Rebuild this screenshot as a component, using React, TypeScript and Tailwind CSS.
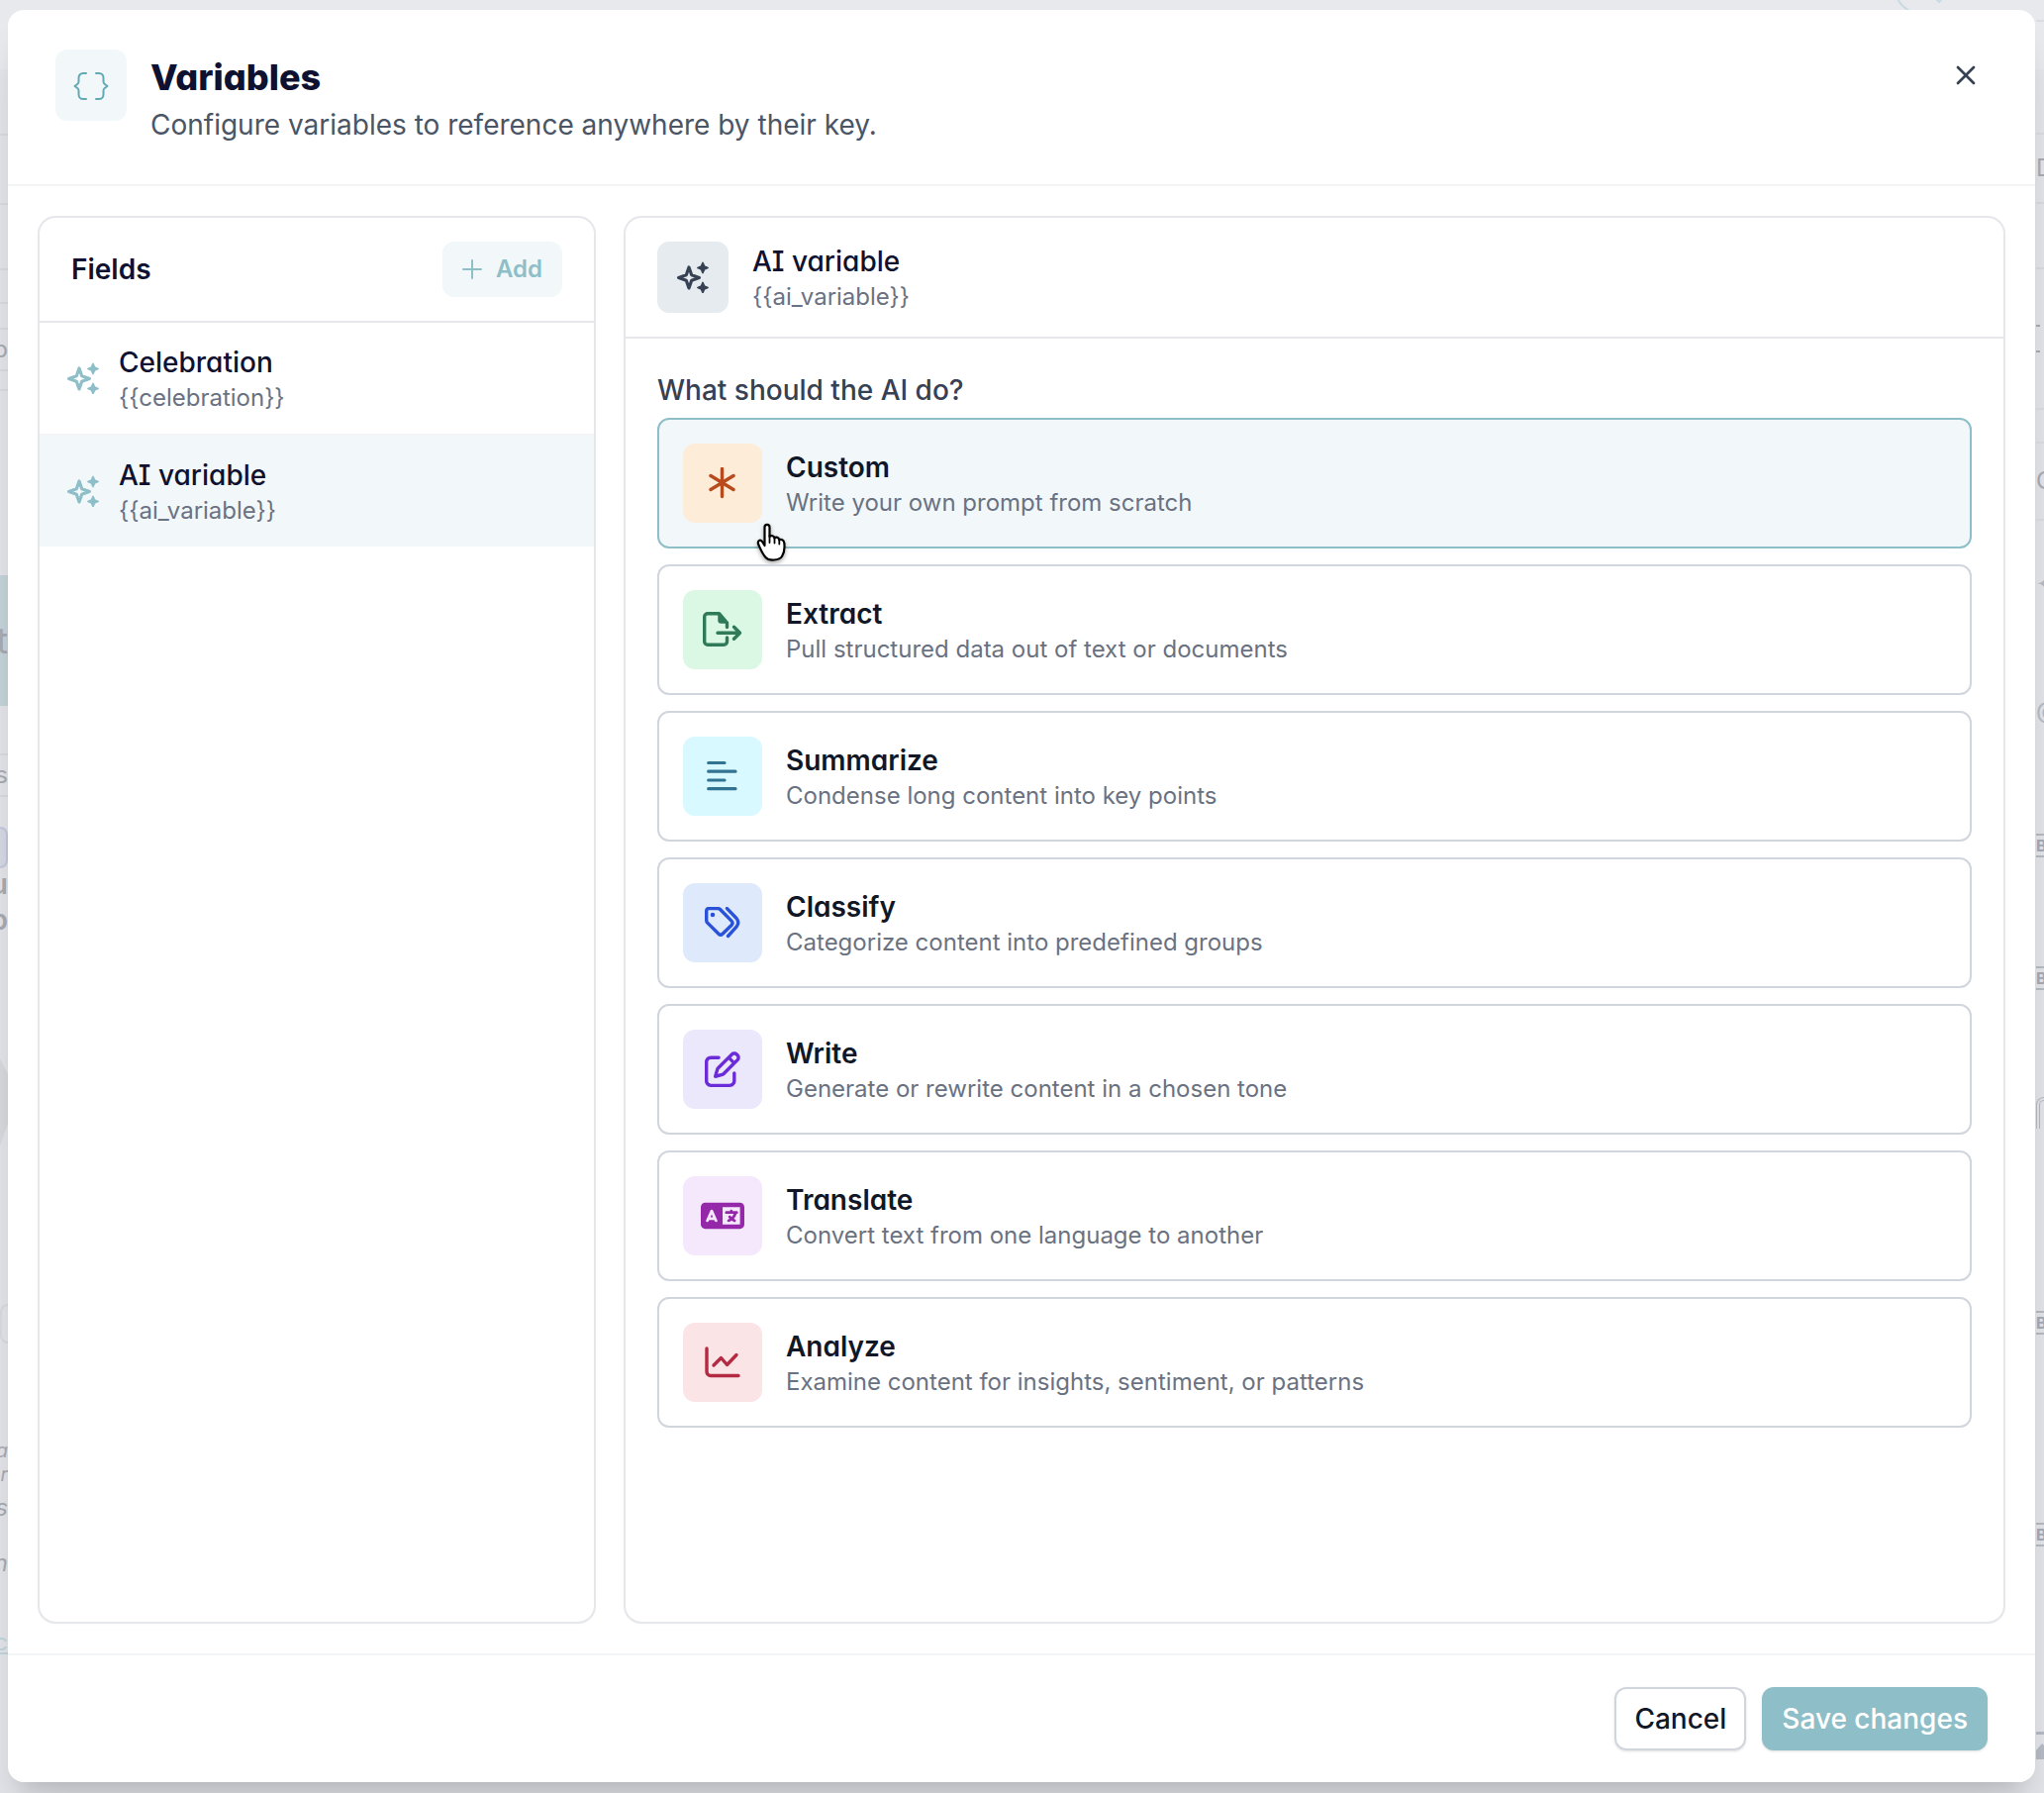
import { useState, type ReactNode } from "react";
import { X } from "lucide-react";
import { FaLanguage, FaRegPenToSquare } from "react-icons/fa6";

const display =
  "font-[Inter,sans-serif] [font-feature-settings:'cv11','cv08'] text-[28px] leading-10";

function Sparkles() {
  return (
    <svg className="size-8" viewBox="0 0 32 32" fill="none" aria-hidden="true">
      <path
        d="M12 6 14.700 13.800 22.400 16.500 14.700 19.200 12 27 9.300 19.200 1.600 16.500 9.300 13.800Z"
        stroke="currentColor"
        strokeWidth="3.2"
        strokeLinejoin="round"
      />
      <path
        d="M26 1.500 27.500 5 31 6.500 27.500 8 26 11.500 24.500 8 21 6.500 24.500 5ZM26 21.500 27.500 25 31 26.500 27.500 28 26 31.500 24.500 28 21 26.500 24.500 25Z"
        fill="currentColor"
        stroke="currentColor"
        strokeWidth="1.8"
        strokeLinejoin="round"
      />
    </svg>
  );
}

function Braces() {
  return (
    <svg className="mt-0.5 h-7 w-9" viewBox="0 0 36 28" fill="none" stroke="currentColor" strokeWidth="2" strokeLinecap="round" strokeLinejoin="round" aria-hidden="true">
      <path d="M13 1H10A4.5 4.5 0 0 0 5.5 5.5V9.5Q5.500 11 4.200 12L1.500 14 4.200 16Q5.500 17 5.500 18.500V22.500A4.500 4.500 0 0 0 10 27H13" />
      <path d="M23 1H26A4.5 4.5 0 0 1 30.500 5.500V9.500Q30.500 11 31.800 12L34.500 14 31.800 16Q30.500 17 30.500 18.500V22.500A4.500 4.500 0 0 1 26 27H23" />
    </svg>
  );
}

function Plus() {
  return (
    <svg className="size-5" viewBox="0 0 20 20" fill="none" stroke="currentColor" strokeWidth="2" strokeLinecap="round" aria-hidden="true">
      <path d="M10 1V19M1 10H19" />
    </svg>
  );
}

function Line({ className, viewBox, children }: { className: string; viewBox: string; children: ReactNode }) {
  return (
    <svg className={className} viewBox={viewBox} fill="none" stroke="currentColor" strokeWidth="3.4" strokeLinecap="round" strokeLinejoin="round" aria-hidden="true">
      {children}
    </svg>
  );
}

const tasks = [
  {
    name: "Custom",
    text: "Write your own prompt from scratch",
    tile: "bg-[#fdecd8] text-[#b84a1c]",
    icon: (
      <Line className="size-8" viewBox="0 0 32 32">
        <path d="M15.500 1.500V29.500M4 8.500 27 22.500M4 22.500 27 8.500" />
      </Line>
    ),
  },
  {
    name: "Extract",
    text: "Pull structured data out of text or documents",
    tile: "bg-[#dbf8e5] text-[#2f7a58]",
    icon: (
      <Line className="h-9 w-10" viewBox="0 0 40 36">
        <path d="M24.500 15.500V11L16.500 1.700H5A3.300 3.300 0 0 0 1.700 5V30A3.300 3.300 0 0 0 5 33.300H21.200A3.300 3.300 0 0 0 24.500 30V26" />
        <path d="M16 2.500V8.500A2.500 2.500 0 0 0 18.500 11H24.500Z" fill="currentColor" strokeWidth="1.500" />
        <path d="M15 21.300H37.500M31.500 15.300 37.500 21.300 31.500 27.300" />
      </Line>
    ),
  },
  {
    name: "Summarize",
    text: "Condense long content into key points",
    tile: "bg-[#d8f9ff] text-[#327391]",
    icon: (
      <Line className="size-8" viewBox="0 0 32 32">
        <path d="M1.700 2.500H18M1.700 11.200H29M1.700 20H18M1.700 28.700H29" strokeWidth="3.2" />
      </Line>
    ),
  },
  {
    name: "Classify",
    text: "Categorize content into predefined groups",
    tile: "bg-[#deeafc] text-[#2a52d8]",
    icon: (
      <Line className="h-8 w-9" viewBox="0 0 36 32">
        <path d="M1.700 4V13.500Q1.700 15 2.800 16.100L14 27.300Q16 29.300 18 27.300L27 18.500Q29 16.300 27 14.100L15.800 2.700Q14.700 1.600 13.200 1.600H4.200Q1.700 1.600 1.700 4Z" />
        <circle cx="8" cy="8" r="2.300" fill="currentColor" stroke="none" />
        <path d="M22.500 1.600 32 11.500Q35.500 15.800 32 20.200L23.500 29.500" />
      </Line>
    ),
  },
  {
    name: "Write",
    text: "Generate or rewrite content in a chosen tone",
    tile: "bg-[#ece8fc] text-[#6a2cd8]",
    icon: <FaRegPenToSquare className="size-9" aria-hidden="true" />,
  },
  {
    name: "Translate",
    text: "Convert text from one language to another",
    tile: "bg-[#f5e8fd] text-[#9528a8]",
    icon: <FaLanguage className="h-9 w-11" aria-hidden="true" />,
  },
  {
    name: "Analyze",
    text: "Examine content for insights, sentiment, or patterns",
    tile: "bg-[#fbe4e6] text-[#b42a42]",
    icon: (
      <Line className="h-8 w-9" viewBox="0 0 36 32">
        <path d="M2 2V25.500A4 4 0 0 0 6 29.500H34" />
        <path d="M9 19 16.500 11.500 22.500 18.500 32 8.500" />
      </Line>
    ),
  },
];

const fields = [
  { name: "Celebration", token: "{{celebration}}" },
  { name: "AI variable", token: "{{ai_variable}}" },
];

function Backdrop() {
  return (
    <div aria-hidden="true" className="absolute inset-0 overflow-hidden bg-[#e4e5ea] text-[24px] leading-8 text-[#a9abb2]">
      <div className="absolute inset-x-0 top-0 h-[70px] bg-[#e7e9ed]" />
      <svg className="absolute right-20 top-0 h-3 w-20" viewBox="0 0 80 12" fill="none" stroke="#c9dbe2" strokeWidth="2">
        <path d="M10 -6Q14 6 26 12M50 -2 54 2 58 -2" />
      </svg>
      <div className="absolute left-0 top-0 w-2 overflow-hidden">
        <div className="flex h-[1811px] flex-col">
          <div className="mt-[135px] h-[72px] border-y-2 border-[#d9dae0]" />
          <div className="h-[66px] border-b-2 border-[#d9dae0]" />
          <div className="h-[34px] border-b-2 border-[#d9dae0]" />
          <div className="h-[26px] border-b-2 border-[#d9dae0]" />
          <div className="flex h-[42px] items-center justify-end border-b-2 border-[#d9dae0]">p</div>
          <div className="h-5 border-b-2 border-[#d9dae0]" />
          <div className="mt-[186px] flex h-[132px] items-center justify-end bg-[#c5d4da] text-[36px]">t</div>
          <div className="mt-12 flex h-11 items-center justify-end border-y-2 border-[#d9dae0]">s</div>
          <div className="mt-[30px] h-[42px] rounded-r-full border-2 border-l-0 border-[#c3c8e0] bg-[#d6d9e3]" />
          <div className="flex justify-end text-[28px] font-semibold">u</div>
          <div className="mt-1 flex justify-end text-[28px] font-semibold">p</div>
          <svg className="mt-[124px] h-[88px] w-2" viewBox="0 0 8 88" fill="#d8d9dd">
            <path d="M0 0 8 16V66L0 88Z" />
          </svg>
          <div className="mt-[160px] h-10 rounded-l-full border-2 border-r-0 border-[#d9dae0]" />
          <div className="mt-24 flex flex-col items-end text-[20px] italic leading-6">
            <span>a</span>
            <span>r</span>
          </div>
          <div className="mt-1.5 flex justify-end italic">s</div>
          <div className="mt-6 flex justify-end italic">n</div>
          <div className="mt-12 flex justify-end text-[#c0d5da] underline">c</div>
        </div>
      </div>
      <div className="absolute right-0 top-0 w-2 overflow-hidden">
        <div className="flex h-[1811px] flex-col">
          <div className="mt-5 h-[116px] border-y-2 border-[#d9dce1]" />
          <div className="flex h-[70px] items-center border-b-2 border-[#d9dae0]">D</div>
          <div className="h-[66px] border-b-2 border-[#d9dae0]" />
          <div className="mt-14 h-7 w-1 border-y-2 border-[#a9abb2]" />
          <div className="mt-14 h-9 border-y-2 border-[#dcdde2]" />
          <div className="flex h-[78px] items-center border-b-2 border-[#dcdde2]">O</div>
          <div className="mt-12 text-[#b5bbc4]">✦</div>
          <div className="mt-[96px] text-[#b5bbc4]">@</div>
          <div className="mt-[108px] h-6 border-y-2 border-[#b5bbc4] text-[16px] font-bold leading-5">B</div>
          <div className="mt-[110px] h-6 border-y-2 border-[#b5bbc4] text-[16px] font-bold leading-5">B</div>
          <div className="mt-[108px] h-8 rounded-tl-lg border-4 border-r-0 border-b-0 border-double border-[#b5bbc4]" />
          <div className="mt-[184px] h-6 border-y-2 border-[#b5bbc4] text-[16px] font-bold leading-5">B</div>
          <div className="mt-[190px] h-6 border-y-2 border-[#b5bbc4] text-[16px] font-bold leading-5">B</div>
          <svg className="mt-[187px] h-7 w-2" viewBox="0 0 8 28" fill="#b5bbc4">
            <path d="M0 0H8V3H0ZM0 19 6 12 8 14V28H0Z" />
          </svg>
        </div>
      </div>
    </div>
  );
}

function Pointer() {
  return (
    <svg className="pointer-events-none absolute -bottom-4 left-24 h-10 w-9 drop-shadow-[0_2px_2px_rgba(0,0,0,0.35)]" viewBox="0 0 36 40" aria-hidden="true">
      <path
        d="M10.500 4.500C10.500 1 15.500 1 15.500 4.500V14C17 12.500 20 13 20.500 15.500C22 14 25 14.800 25.300 17.300C27.500 16.300 30 17.500 30.300 20.500C31 26 30.500 30 28 34C25.500 38 15 39 11.500 35C8 31 6.500 27 4.500 22.500C2.500 18 6 16.500 8 19L10.500 23Z"
        fill="#fff"
        stroke="#000"
        strokeWidth="2.200"
        strokeLinejoin="round"
      />
      <path d="M15.500 13V20M20.500 15.500V20.500M25.300 17.500V21.500" stroke="#000" strokeWidth="1.800" strokeLinecap="round" />
    </svg>
  );
}

export default function App() {
  const [field, setField] = useState(1);
  const [task, setTask] = useState(0);

  return (
    <div className="relative flex min-h-screen pt-2.5 pr-[9px] pb-[11px] pl-2 font-[Inter,sans-serif]">
      <Backdrop />
      <div
        role="dialog"
        aria-labelledby="dialog-title"
        className="relative flex min-w-0 flex-1 flex-col rounded-2xl bg-white shadow-[0_40px_50px_-10px_rgba(0,0,0,0.12),0_16px_20px_-12px_rgba(0,0,0,0.12)]"
      >
        <header className="flex items-start gap-6 border-b-2 border-gray-100 px-12 py-10">
          <div className="flex size-18 items-center justify-center rounded-xl bg-[#f2f8fa] text-[#62a9b6]">
            <Braces />
          </div>
          <div className="flex-1">
            <h1 id="dialog-title" className="font-[Inter,sans-serif] text-[36px] leading-14 font-extrabold text-[#0e1230] [font-feature-settings:'cv11','cv08']">
              Variables
            </h1>
            <p className="text-[28px] leading-10 text-gray-600">Configure variables to reference anywhere by their key.</p>
          </div>
          <button type="button" aria-label="Close" className="mt-2.5 mr-1.5 text-gray-700">
            <X className="size-8" />
          </button>
        </header>

        <main className="flex flex-1 gap-8 p-8">
          <section className="w-140 shrink-0 rounded-2xl shadow-sm ring-2 ring-gray-200">
            <div className="flex items-center justify-between border-b-2 border-gray-200 px-8 py-6">
              <h2 className={`${display} font-semibold text-[#0e1230]`}>Fields</h2>
              <button type="button" className="flex h-14 items-center gap-3.5 rounded-xl bg-[#f2f8fa] px-5 text-[24px] font-semibold text-[#8ebfc8]">
                <Plus />
                Add
              </button>
            </div>
            <ul className="divide-y-2 divide-gray-100">
              {fields.map((f, i) => (
                <li key={f.name}>
                  <button
                    type="button"
                    onClick={() => setField(i)}
                    className={`flex w-full items-center gap-4 px-6 py-5 text-left ${i === field ? "bg-[#f2f8fa]" : "bg-white"}`}
                  >
                    <span className="flex w-10 justify-center text-[#8ebfc8]">
                      <Sparkles />
                    </span>
                    <span>
                      <span className={`block ${display} font-medium text-[#0e1230]`}>{f.name}</span>
                      <span className="block text-[24px] leading-8 text-gray-500">{f.token}</span>
                    </span>
                  </button>
                </li>
              ))}
            </ul>
          </section>

          <section className="min-w-0 flex-1 rounded-2xl shadow-sm ring-2 ring-gray-200">
            <div className="flex items-center gap-6 border-b-2 border-gray-200 px-8 py-6">
              <div className="flex size-18 items-center justify-center rounded-xl bg-[#e6ebef] text-gray-700">
                <Sparkles />
              </div>
              <div>
                <h2 className={`${display} font-medium text-[#0e1230]`}>{fields[field].name}</h2>
                <p className="text-[24px] leading-8 text-gray-500">{fields[field].token}</p>
              </div>
            </div>
            <div className="p-8">
              <h3 id="task-label" className="mb-2 text-[28px] leading-10 font-medium text-gray-700">
                What should the AI do?
              </h3>
              <div role="group" aria-labelledby="task-label" className="flex flex-col gap-4">
                {tasks.map((t, i) => (
                  <button
                    key={t.name}
                    type="button"
                    onClick={() => setTask(i)}
                    className={`relative flex items-center gap-6 rounded-xl border-2 p-6 text-left ${i === task ? "border-[#8ebfc8] bg-[#f2f8fa]" : "border-gray-300 bg-white"}`}
                  >
                    <span className={`flex size-20 items-center justify-center rounded-xl ${t.tile}`}>{t.icon}</span>
                    <span>
                      <span className={`block ${display} font-semibold text-gray-900`}>{t.name}</span>
                      <span className="block text-[24px] leading-8 text-gray-500">{t.text}</span>
                    </span>
                    {i === 0 && <Pointer />}
                  </button>
                ))}
              </div>
            </div>
          </section>
        </main>

        <footer className="flex justify-end gap-4 border-t-2 border-gray-100 px-12 py-8">
          <button type="button" className="h-16 rounded-xl border-2 border-gray-300 px-[18px] text-[28px] font-medium text-gray-900 shadow-sm">
            Cancel
          </button>
          <button type="button" className="h-16 rounded-xl bg-[#8ebfc8] px-5 text-[28px] font-medium text-white shadow-sm">
            Save changes
          </button>
        </footer>
      </div>
    </div>
  );
}
